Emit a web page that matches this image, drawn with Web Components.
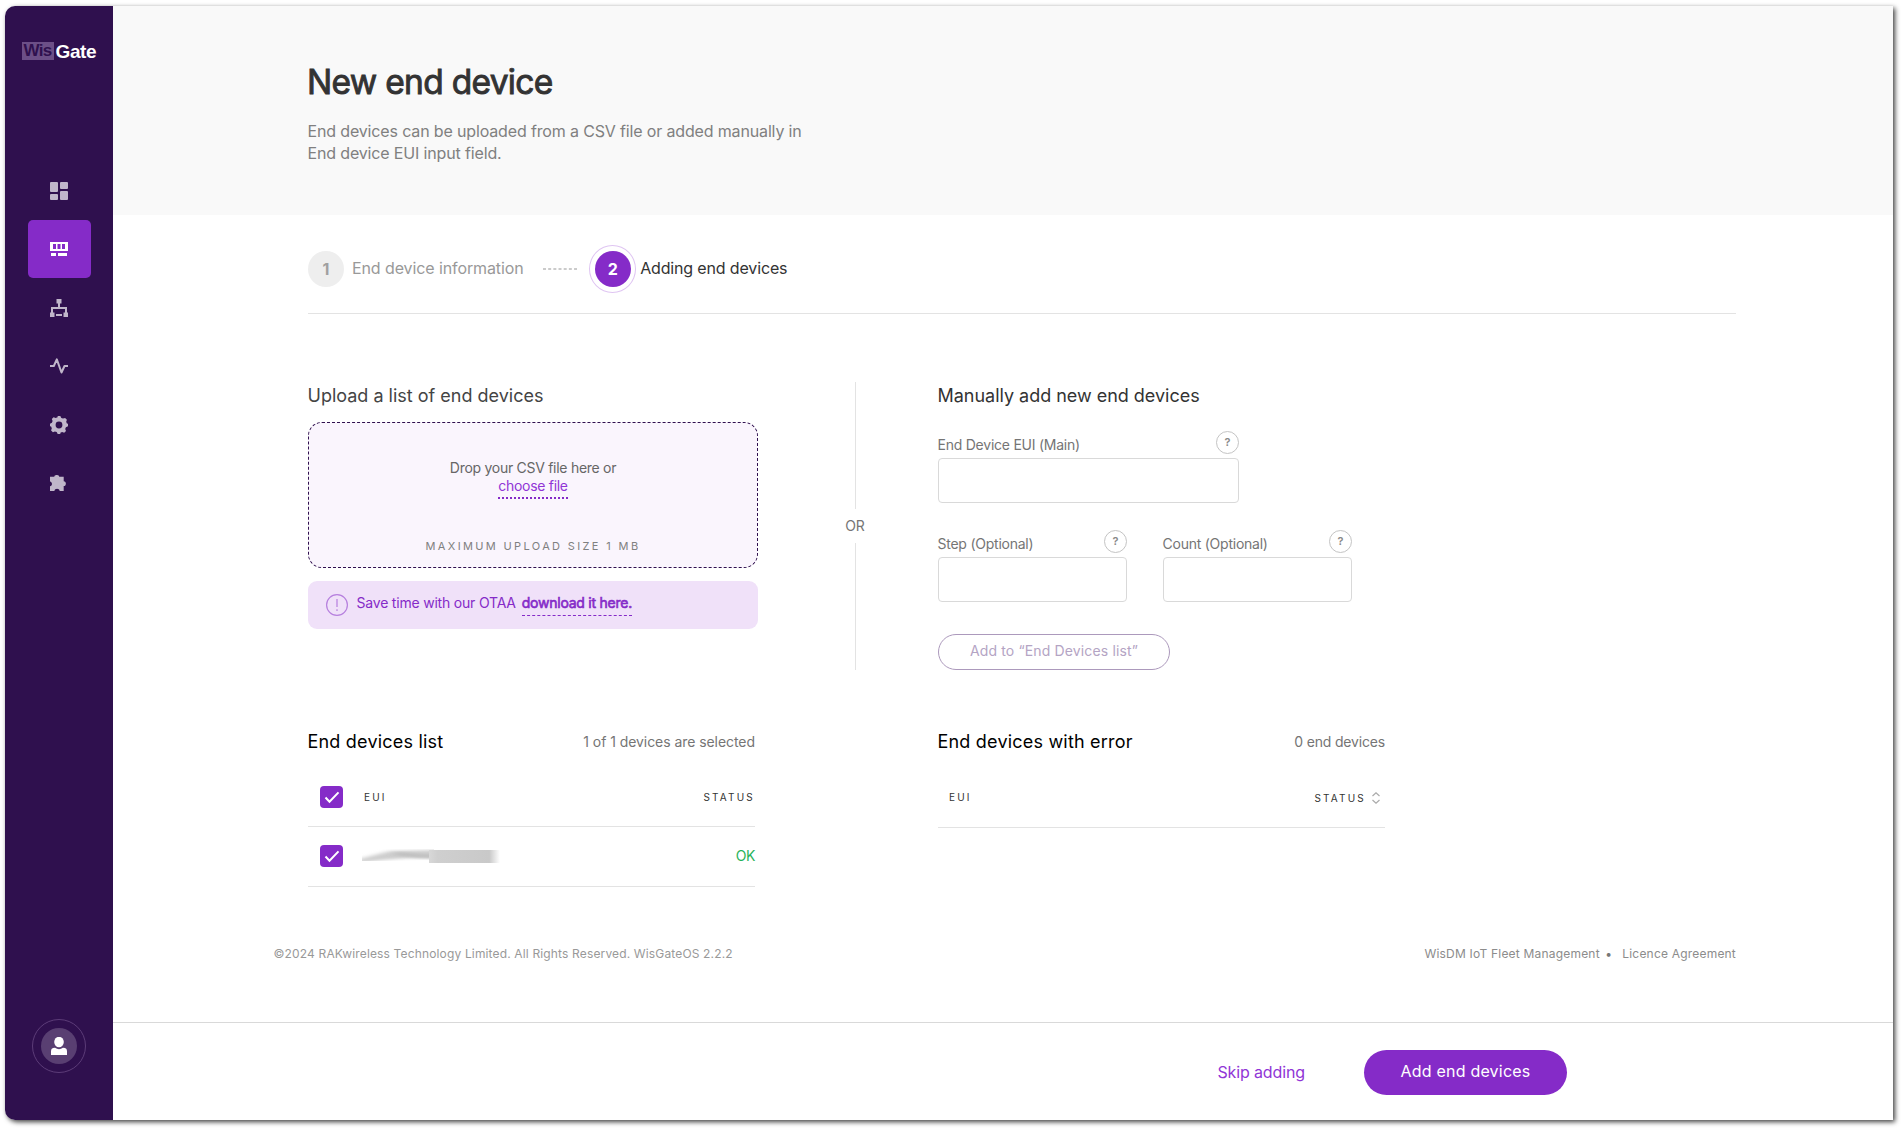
<!DOCTYPE html>
<html lang="en">
<head>
<meta charset="utf-8">
<title>WisGate - New end device</title>
<style>
html,body{margin:0;background:#fff}
body{padding:6px 9px 9px 5px;font-family:Inter,sans-serif;color:#333;height:1114px;overflow:hidden}
</style>
</head>
<body>
<wg-app></wg-app>
<script>
const define=(name,html,setup)=>customElements.define(name,class extends HTMLElement{
  connectedCallback(){
    if(this.shadowRoot)return;
    const t=document.createElement('template');
    t.innerHTML='<style>*{box-sizing:border-box}:host{display:block;box-sizing:border-box}</style>'+html;
    this.attachShadow({mode:'open'}).append(t.content.cloneNode(true));
    if(setup)setup(this,this.shadowRoot);
  }
});

define('wg-logo',`<style>
:host{display:flex;width:75px;height:18px;align-items:center;font:700 17px/18px "Liberation Sans",sans-serif;letter-spacing:-.7px}
.w{width:32px;height:18px;background:#6c4f87;color:#2f104e;padding-left:2px}
.g{padding:1px 0 0 2px;color:#fff;font-size:19px;letter-spacing:-.4px}
</style><span class="w">Wis</span><span class="g">Gate</span>`);

define('wg-nav-item',`<style>
:host{display:flex;width:63px;height:58px;border-radius:5px;align-items:center;justify-content:center;padding-right:1px;color:#c0b6ca}
:host([active]){background:#852bc8;color:#fff}
::slotted(svg){display:block}
</style><slot></slot>`);

define('wg-avatar',`<style>
:host{display:flex;width:54px;height:54px;border:1px solid #5c3c78;border-radius:50%;align-items:center;justify-content:center}
div{width:36px;height:36px;border-radius:50%;background:#593f72;display:flex;align-items:center;justify-content:center}
</style><div><svg width="16" height="18" viewBox="0 0 16 18" fill="#fff"><ellipse cx="8" cy="5" rx="4.800" ry="5.200"/><path d="M0 18v-4Q0 11.500 2 11L4 10.800Q8 13.500 12 10.800L14 11Q16 11.500 16 14v4z"/></svg></div>`);

define('wg-sidebar',`<style>
:host{display:flex;flex-direction:column;width:108px;background:#2f104e;border-radius:10px 0 0 10px;align-items:center;padding-top:36px;padding-bottom:47px;flex:none}
nav{display:flex;flex-direction:column;gap:.4px;margin-top:102px;margin-right:-1px}
wg-avatar{margin-top:auto}
</style><wg-logo></wg-logo>
<nav>
<wg-nav-item><svg width="18" height="18" fill="currentColor"><rect width="8" height="10" rx="1"/><rect x="10" width="8" height="7" rx="1"/><rect y="12" width="8" height="6" rx="1"/><rect x="10" y="9" width="8" height="9" rx="1"/></svg></wg-nav-item>
<wg-nav-item active><svg width="18" height="14" fill="currentColor"><path fill-rule="evenodd" d="M0 0h18v9H0zM3 2v5h3V2zM7.500 2v5h3V2zM12 2v5h3V2z"/><rect x="1" y="11" width="5" height="3"/><rect x="8" y="11" width="9" height="3"/></svg></wg-nav-item>
<wg-nav-item><svg width="18" height="18" fill="currentColor"><path d="M6.500 0h5v4.500H10V8h7v5.500h1V18h-4.500v-4.500H15V10H3v3.500h1.500V18H0v-4.500h1V8h7V4.500H6.500z"/><rect x="6" y="15" width="6" height="2"/></svg></wg-nav-item>
<wg-nav-item><svg width="18" height="16" fill="none" stroke="currentColor" stroke-width="2" stroke-linejoin="round"><path d="M0 8h3.800L6.800 1.300 11.500 14.500 14.500 8H18"/></svg></wg-nav-item>
<wg-nav-item><svg width="18" height="18" viewBox="-9 -9 18 18" fill="currentColor" class="gear"><path fill-rule="evenodd" d="M-1.300-9h2.600l1 1.900 1.700.7 2.100-.7 1.800 1.800-.7 2.100.7 1.800L9-1.300v2.600l-2.100.9-.7 1.700.8 2.100-1.800 1.800-2.100-.8-1.700.7L1.300 9h-2.600l-1-1.900-1.800-.7-2 .8-1.800-1.800.7-2.100-.7-1.800L-9 1.300v-2.600l1.900-1 .7-1.700-.8-2 1.800-1.800 2.100.7 1.900-.7zM0-3.400A3.400 3.400 0 1 0 0 3.400 3.400 3.400 0 1 0 0-3.400z"/></svg></wg-nav-item>
<wg-nav-item><svg width="18" height="16" fill="currentColor"><path d="M0 1.700h4.300C4.300-.6 9.200-.6 9.200 1.700H13.700V6.200C16.600 6.300 16.600 11 13.700 11V16H9.700C9.500 13 4.600 13 4.400 16H0v-4.700C2.600 11 2.600 6.900 0 6.500z"/></svg></wg-nav-item>
</nav><wg-avatar></wg-avatar>`);

define('wg-page-head',`<style>
:host{background:#f9f9f9;height:209px;padding:56px 0 0 194px}
h1{margin:0;font-size:33.500px;line-height:40px;font-weight:400;-webkit-text-stroke:.9px #333;color:#333;letter-spacing:-.7px}
p{margin:18px 0 0 .5px;font-size:16px;line-height:22px;color:#808080;width:520px;letter-spacing:-.15px}
</style><h1><slot name="title"></slot></h1><p><slot></slot></p>`);

define('wg-step',`<style>
:host{display:flex;align-items:center;font-size:16px;line-height:22px;color:#999;letter-spacing:-.1px}
.o{display:flex;align-items:center;justify-content:center}
b{width:36px;height:36px;border-radius:50%;background:#eee;display:flex;align-items:center;justify-content:center;padding-bottom:1px;color:#a0a0a0;font-weight:700}
.l{margin-left:8px;padding-bottom:2px}
:host([active]){color:#333;letter-spacing:-.15px}
:host([active]) .o{width:47px;height:48px;border:1px solid #dfc5f2;border-radius:50%}
:host([active]) b{background:#852bc8;color:#fff}
:host([active]) .l{margin-left:4px}
</style><span class="o"><b></b></span><span class="l"><slot></slot></span>`,(h,r)=>{r.querySelector('b').textContent=h.getAttribute('n')});

define('wg-stepper',`<style>
:host{display:flex;align-items:center;height:99px;padding-top:10px;border-bottom:1px solid #e3e3e3}
svg{margin:0 12px 0 19.500px}
</style><wg-step n="1">End device information</wg-step><svg width="34" height="2"><path d="M0 1H34" stroke="#bbb" stroke-width="1.500" stroke-dasharray="3 2.170"/></svg><wg-step n="2" active>Adding end devices</wg-step>`);

define('wg-dropzone',`<style>
:host{height:146px;border:1px dashed #2f104e;border-radius:14px;background:#faf5fd;text-align:center;padding-top:36px;font-size:14px;line-height:18px;color:#666;letter-spacing:-.28px}
a{display:block;width:max-content;margin:0 auto;color:#9035d6;border-bottom:2px dotted #852bc8;padding-bottom:2px;letter-spacing:-.3px}
small{display:block;margin-top:39px;font-size:11px;line-height:16px;letter-spacing:2.360px;color:#808080}
</style><span class="t">Drop your CSV file here or</span><a>choose file</a><small>MAXIMUM UPLOAD SIZE 1 MB</small>`);

define('wg-notice',`<style>
:host{display:flex;height:48px;border-radius:9px;background:#f0e1f9;padding:13px 18px 0;font-size:14px;line-height:18px;color:#852bc8;letter-spacing:-.2px}
span{margin-left:8.500px}
a{margin-left:6px;-webkit-text-stroke:.6px #852bc8;height:22px;border-bottom:1px dashed #852bc8;letter-spacing:-.24px}
</style><svg width="22" height="22" fill="none" stroke="#b67fde" stroke-width="1.200"><circle cx="11" cy="11" r="10.400"/><path d="M11 5v8M11 15.200v1.800"/></svg><span>Save time with our OTAA</span><a>download it here.</a>`);

define('wg-divider',`<style>
:host{display:flex;flex-direction:column;align-items:center;width:40px;font-size:14px;line-height:18px;color:#757575}
i{width:1px;flex:1;background:#e3e3e3}
span{padding:8px 0}
</style><i></i><span><slot></slot></span><i></i>`);

define('wg-field',`<style>
.r{display:flex;justify-content:space-between;height:23px;align-items:flex-end;font-size:14px;line-height:18px;color:#757575}
.l{margin-left:-.5px;letter-spacing:-.24px}
.q{width:23px;height:23px;border:1px solid #c4c4c4;border-radius:50%;font-size:11px;line-height:21px;font-weight:600;text-align:center;color:#888}
.i{height:45px;margin-top:4px;border:1px solid #d9d9d9;border-radius:4px;background:#fff}
</style><div class="r"><span class="l"><slot></slot></span><span class="q">?</span></div><div class="i"></div>`);

define('wg-button',`<style>
:host{display:flex;align-items:center;justify-content:center;padding-bottom:3px}
:host([kind=outline]){width:232px;height:36px;border:1px solid #ac99bc;border-radius:18px;color:#b4a4c4;font-size:14px;letter-spacing:.14px}
:host([kind=solid]){width:203px;height:45px;border-radius:22.500px;background:#852bc8;color:#fff;font-size:16px;letter-spacing:.2px}
:host([kind=text]){color:#9035d6;font-size:16px;letter-spacing:-.12px;padding-bottom:2px}
</style><slot></slot>`);

define('wg-check',`<style>
:host{width:23px;height:22px;border-radius:4px;background:#852bc8}
</style><svg width="23" height="22" fill="none" stroke="#fff" stroke-width="2"><path d="M5.500 11.500l4 4.200 9-9.300"/></svg>`);

define('wg-list-head',`<style>
:host{display:flex;justify-content:space-between;align-items:center;height:24px;font-size:18px;line-height:24px;color:#000;letter-spacing:.2px}
.h{margin-left:-.5px}
.c{font-size:14px;color:#757575;letter-spacing:-.06px}
</style><span class="h"><slot></slot></span><span class="c"><slot name="count"></slot></span>`);

define('wg-row',`<style>
:host{display:flex;align-items:center;height:60px;border-bottom:1px solid #e3e3e3;padding:0 0 2px 12px;font-size:14px}
:host([head]){height:59px;padding-bottom:0;font-size:10px;letter-spacing:2.200px;color:#333}
:host([plain]){height:60px;padding:0 0 1px 11px}
</style><slot></slot>`);

define('wg-masked',`<style>
:host{width:138px;height:14px;overflow:hidden}
svg{display:block}
</style><svg width="138" height="14"><defs><filter id="f" x="-20%" y="-60%" width="140%" height="220%"><feGaussianBlur stdDeviation="4 1.800"/></filter><linearGradient id="g"><stop offset="0" stop-color="#d8d8d8"/><stop offset=".12" stop-color="#cfcfcf"/><stop offset=".85" stop-color="#c9c9c9"/><stop offset="1" stop-color="#fff"/></linearGradient><clipPath id="c"><path d="M0 0H72V12H0z"/></clipPath></defs><g clip-path="url(#c)"><path d="M-6 11L28 2 80 1V9L46 9 20 11 -6 14z" fill="#cdcdcd" filter="url(#f)"/><path d="M34 4.500L56 7 80 8" stroke="#bcbcbc" stroke-width="3" fill="none" filter="url(#f)"/></g><path d="M67 1H138V14H67z" fill="url(#g)"/></svg>`);

define('wg-footer',`<style>
:host{display:flex;font-size:12px;line-height:16px;color:#999;letter-spacing:.15px}
.a{margin-left:auto}.a,.e{color:#8c8c8c;letter-spacing:.2px}
.d{margin:0 12px 0 5.500px;width:5px;color:#777}
</style><span class="c">©2024 RAKwireless Technology Limited. All Rights Reserved. WisGateOS 2.2.2</span><span class="a">WisDM IoT Fleet Management</span><span class="d">•</span><span class="e">Licence Agreement</span>`);

define('wg-app',`<style>
:host{display:flex;width:1888px;height:1114px;border-radius:10px 0 0 10px;background:#fff;box-shadow:2px 2px 5px rgba(0,0,0,.75)}
.page{flex:1;display:flex;flex-direction:column}
main{padding:0 157px 0 195px}
.cols{display:flex;margin-top:68px;height:288px}
.left{width:450px}
wg-divider{margin:0 63px 0 77px}
h2{margin:2px 0 0 -.5px;font-size:18px;line-height:24px;font-weight:400;color:#444;letter-spacing:0}
h2.b{color:#333;letter-spacing:-.02px}
wg-dropzone{margin-top:14px}wg-notice{margin-top:13px}
.main{width:301px;margin-top:23px}
.pair{display:flex;gap:36px;margin:27px 0 32px}.pair wg-field{width:189px}
.lists{display:flex;gap:183px;margin-top:60px;height:157px}
.lists section{width:447px}
.first{margin-top:14px}
.eui{margin-left:21px}.st{margin-left:auto}
.lo{padding-top:2px}
.n{letter-spacing:-.18px}
wg-masked{margin-left:19px}.ok{color:#28b35a;letter-spacing:-.4px}
.sort{margin:2px 5px 0 6px}
wg-footer{margin:59px 0 0 -34.500px}
.bar{margin-top:auto;height:98px;border-top:1px solid #d9d9d9;display:flex;align-items:center;justify-content:flex-end;padding:2px 326px 0 0;gap:59px}
</style>
<wg-sidebar></wg-sidebar>
<div class="page">
<wg-page-head><span slot="title">New end device</span>End devices can be uploaded from a CSV file or added manually in<br>End device EUI input field.</wg-page-head>
<main>
<wg-stepper></wg-stepper>
<div class="cols">
<section class="left"><h2>Upload a list of end devices</h2><wg-dropzone></wg-dropzone><wg-notice></wg-notice></section>
<wg-divider>OR</wg-divider>
<section><h2 class="b">Manually add new end devices</h2>
<wg-field class="main">End Device EUI (Main)</wg-field>
<div class="pair"><wg-field>Step (Optional)</wg-field><wg-field>Count (Optional)</wg-field></div>
<wg-button kind="outline">Add to “End Devices list”</wg-button></section>
</div>
<div class="lists">
<section><wg-list-head>End devices list<span slot="count">1 of 1 devices are selected</span></wg-list-head>
<wg-row head class="first"><wg-check></wg-check><span class="eui">EUI</span><span class="st">STATUS</span></wg-row>
<wg-row><wg-check></wg-check><wg-masked></wg-masked><span class="st ok">OK</span></wg-row></section>
<section><wg-list-head>End devices with error<span slot="count" class="n">0 end devices</span></wg-list-head>
<wg-row head plain class="first"><span>EUI</span><span class="st lo">STATUS</span><svg class="sort" width="8" height="12" fill="none" stroke="#aaa" stroke-width="1.200"><path d="M.5 4L4 .8 7.500 4M.5 8L4 11.200 7.500 8"/></svg></wg-row></section>
</div>
<wg-footer></wg-footer>
</main>
<div class="bar"><wg-button kind="text">Skip adding</wg-button><wg-button kind="solid">Add end devices</wg-button></div>
</div>`);
</script>
</body>
</html>
